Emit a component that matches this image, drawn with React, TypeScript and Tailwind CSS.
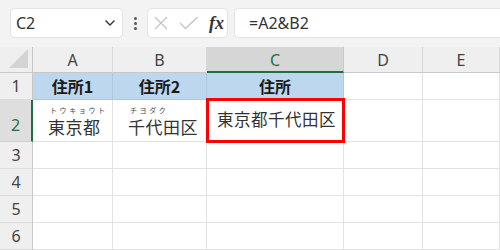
import React from "react";

const jp = { fontFamily: '"Noto Sans CJK JP", "Noto Sans", sans-serif' };
const ui = { fontFamily: '"Noto Sans", "Open Sans", sans-serif' };

const cols = ["A", "B", "C", "D", "E"];

function ColHeader({ label, selected }: { label: string; selected?: boolean }) {
  return (
    <div
      className={
        selected
          ? "flex items-center justify-center bg-[#d6d6d6] border-r border-[#c8c8c8] border-b-2 border-b-[#1e7145] text-[#1e7145] text-[16px] pt-[2px]"
          : "flex items-center justify-center bg-[#efefef] border-r border-[#d9d9d9] border-b border-b-[#c8c8c8] text-[#444] text-[16px]"
      }
      style={ui}
    >
      {label}
    </div>
  );
}

function RowHeader({ n, selected }: { n: number; selected?: boolean }) {
  return (
    <div
      className={
        selected
          ? "flex items-center justify-center bg-[#dedede] border-r-2 border-r-[#1e7145] border-b border-[#d0d0d0] text-[#1e7145] text-[16px] pt-[8px]"
          : "flex items-center justify-center bg-[#efefef] border-r border-r-[#c8c8c8] border-b border-[#dcdcdc] text-[#444] text-[16px]"
      }
      style={ui}
    >
      {n}
    </div>
  );
}

function Cell({ children, className = "" }: { children?: React.ReactNode; className?: string }) {
  return <div className={"border-r border-b border-[#e2e2e2] bg-white " + className}>{children}</div>;
}

function HeadCell({ children }: { children: React.ReactNode }) {
  return (
    <div className="flex items-center justify-center bg-[#bdd7ee] border-r border-b border-[#b0c8de] font-bold text-[16px] text-[#1a1a1a]" style={jp}>
      {children}
    </div>
  );
}

function Ruby({ kana, text }: { kana: string; text: string }) {
  return (
    <div className="flex flex-col pl-[15px] pt-[6px]" style={jp}>
      <span className="text-[7px] leading-[9px] text-[#444] tracking-[2.6px] pl-[2px]">{kana}</span>
      <span className="text-[17px] leading-[24px] text-[#333] tracking-[0.5px]">{text}</span>
    </div>
  );
}

export default function App() {
  return (
    <div className="w-[500px] h-[250px] overflow-hidden bg-white flex flex-col">
      {/* toolbar */}
      <div className="h-[47px] bg-[#f3f3f3] flex items-start pt-[8px] pl-[10px] shrink-0">
        <div className="w-[113px] h-[30px] bg-white rounded-[5px] border border-[#e3e3e3] flex items-center justify-between pl-[5px] pr-[6px]">
          <span className="text-[16px] text-[#333]" style={ui}>C2</span>
          <svg width="12" height="8" viewBox="0 0 12 8">
            <path d="M1.5 1.5 L6 6 L10.5 1.5" stroke="#333" strokeWidth="1.4" fill="none" />
          </svg>
        </div>
        <div className="w-[24px] h-[30px] flex flex-col items-center justify-center gap-[2px]">
          <span className="w-[3px] h-[3px] rounded-full bg-[#555]" />
          <span className="w-[3px] h-[3px] rounded-full bg-[#555]" />
          <span className="w-[3px] h-[3px] rounded-full bg-[#555]" />
        </div>
        <div className="w-[81px] h-[30px] bg-white rounded-[5px] border border-[#e3e3e3] flex items-center pl-[6px]">
          <svg width="14" height="14" viewBox="0 0 14 14">
            <path d="M1 1 L13 13 M13 1 L1 13" stroke="#c4c4c4" strokeWidth="1.3" fill="none" />
          </svg>
          <svg width="20" height="14" viewBox="0 0 20 14" className="ml-[11px]">
            <path d="M1 7 L6.5 12.5 L18.5 1" stroke="#c4c4c4" strokeWidth="1.3" fill="none" />
          </svg>
          <span
            className="ml-[10px] text-[18px] italic font-semibold text-[#333] leading-none"
            style={{ fontFamily: '"Liberation Serif", "DejaVu Serif", serif' }}
          >
            fx
          </span>
        </div>
        <div className="ml-[6px] flex-1 h-[30px] bg-white rounded-l-[5px] border border-r-0 border-[#e3e3e3] flex items-center pl-[14px]">
          <span className="text-[16px] text-[#333]" style={ui}>=A2&amp;B2</span>
        </div>
      </div>

      {/* grid */}
      <div className="grid grid-cols-[33px_80px_94px_137px_79px_1fr] grid-rows-[26px_27px_42px_27px_27px_27px_27px] flex-1">
        <div className="bg-[#efefef] border-r border-b border-[#c8c8c8] relative">
          <svg width="22" height="20" viewBox="0 0 22 20" className="absolute right-[3px] bottom-[3px]">
            <path d="M21 0 L21 19 L2 19 Z" fill="#d4d4d4" />
          </svg>
        </div>
        {cols.map((c) => (
          <ColHeader key={c} label={c} selected={c === "C"} />
        ))}

        <RowHeader n={1} />
        <HeadCell>住所1</HeadCell>
        <HeadCell>住所2</HeadCell>
        <HeadCell>住所</HeadCell>
        <Cell />
        <Cell />

        <RowHeader n={2} selected />
        <Cell>
          <Ruby kana="トウキョウト" text="東京都" />
        </Cell>
        <Cell>
          <Ruby kana="チヨダク" text="千代田区" />
        </Cell>
        <Cell className="relative">
          <div className="absolute left-[-1px] top-[-2px] right-[-2px] bottom-[-2px] border-[3px] border-[#ff0000]" />
          <div className="h-full flex items-center pl-[10px] pb-[2px] text-[16.5px] text-[#333] tracking-[0.5px]" style={jp}>
            東京都千代田区
          </div>
        </Cell>
        <Cell />
        <Cell />

        {[3, 4, 5, 6].map((r) => (
          <React.Fragment key={r}>
            <RowHeader n={r} />
            <Cell />
            <Cell />
            <Cell />
            <Cell />
            <Cell />
          </React.Fragment>
        ))}
      </div>
    </div>
  );
}
